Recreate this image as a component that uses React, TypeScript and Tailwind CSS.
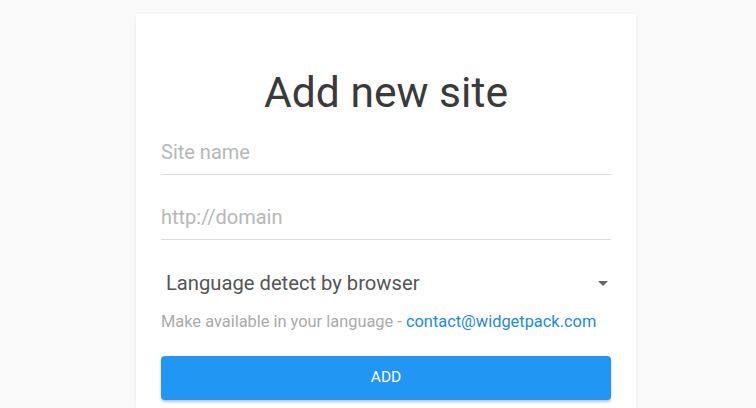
export default function App() {
  return (
    <div className="min-h-[408px] w-full bg-[#f9f9f9] font-['Roboto',sans-serif] flex justify-center pt-[14px] pl-[16px]">
      <div className="w-[500px] bg-white shadow-[0_1px_4px_rgba(0,0,0,0.06)] px-[25px] pt-[50px]">
        <h1 className="text-center text-[42.6px] leading-[56px] text-[#3a3a3a] font-normal">Add new site</h1>
        <div className="mt-[9px] border-b border-[#dddddd] h-[46px] flex items-center">
          <span className="text-[20px] text-[#b7b7b7]">Site name</span>
        </div>
        <div className="mt-[19px] border-b border-[#dddddd] h-[46px] flex items-center">
          <span className="text-[20px] text-[#b7b7b7]">http://domain</span>
        </div>
        <div className="mt-[20px] h-[46px] flex items-center justify-between pl-[5px] pr-[3px]">
          <span className="text-[20.2px] text-[#555555]">Language detect by browser</span>
          <svg width="10" height="5" viewBox="0 0 10 5">
            <path d="M0 0 L10 0 L5 5 Z" fill="#666666" />
          </svg>
        </div>
        <p className="mt-[4px] text-[16.4px] leading-[24px] text-[#aaaaaa]">
          Make available in your language -{" "}
          <a className="text-[#1e88e5]">contact@widgetpack.com</a>
        </p>
        <button className="mt-[22px] w-full h-[44px] rounded-[4px] bg-[#2196f3] text-white text-[15.5px] shadow-[0_2px_3px_rgba(0,0,0,0.25)]">
          ADD
        </button>
      </div>
    </div>
  );
}
